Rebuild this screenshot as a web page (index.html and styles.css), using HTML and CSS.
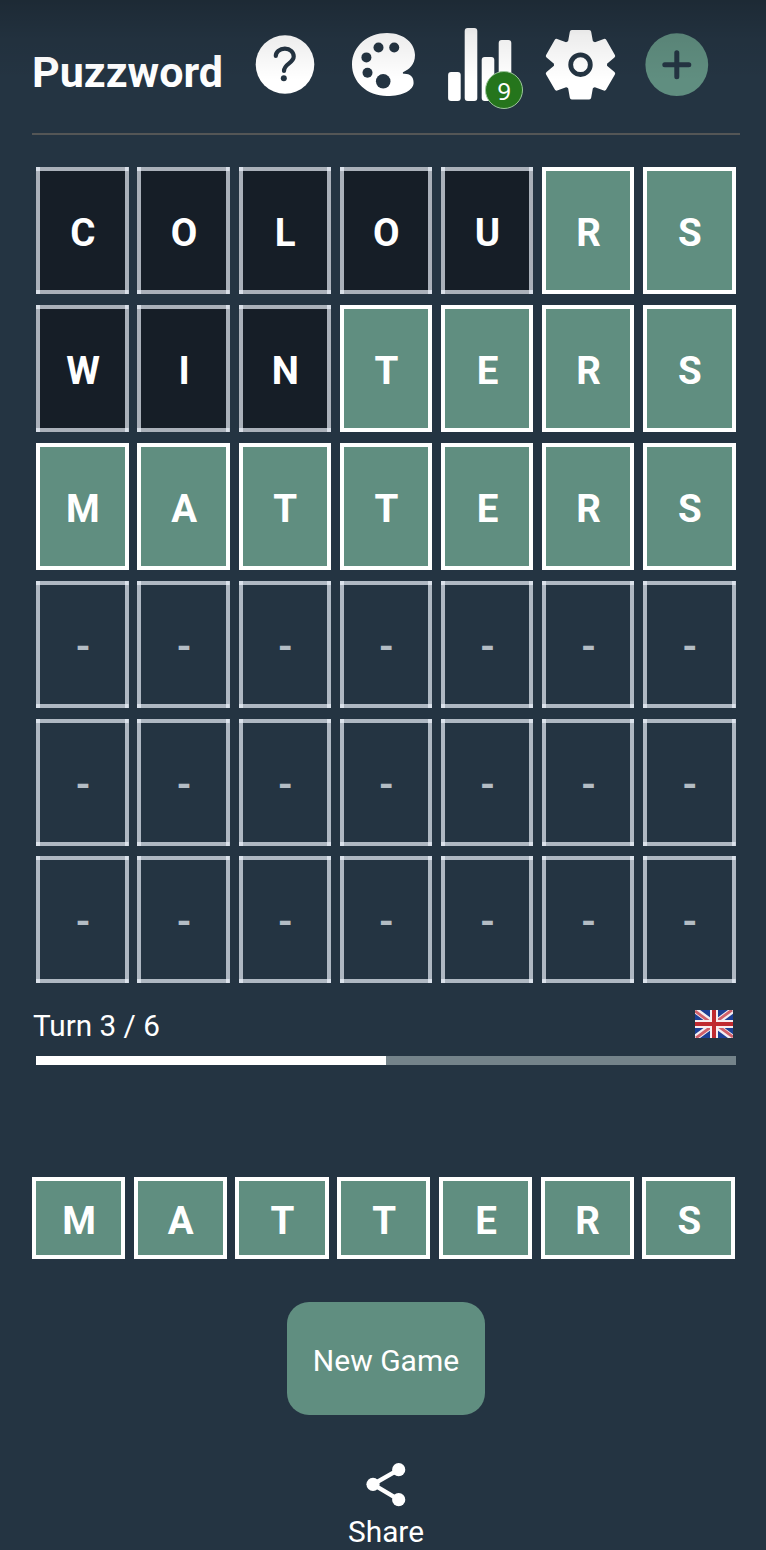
FILE: index.html
```html
<!DOCTYPE html>
<html lang="en">
<head>
    <meta charset="UTF-8">
    <meta name="viewport" content="width=device-width, initial-scale=1.0">
    <title>Puzzword</title>
    <link rel="stylesheet" href="styles.css">
</head>
<body>
    <header class="header">
        <h1 class="title">Puzzword</h1>
        <nav class="toolbar">
            <svg class="icon" viewBox="0 0 98 76">
                <circle cx="49" cy="37.5" r="29.3" fill="#fff"/>
                <path d="M39.8 29C39.8 25 43.5 21.6 48.9 21.6C54.2 21.6 57.7 25.2 57.7 29.6C57.7 36.3 48 36.5 48 44" fill="none" stroke="#243442" stroke-width="4.2" stroke-linecap="round"/>
                <circle cx="47.8" cy="51.3" r="3" fill="#243442"/>
            </svg>
            <svg class="icon" viewBox="0 0 98 76">
                <path d="M53 6C71 6 81 17 81 28C81 38 75 42.5 69 45.2C68.5 46.4 69 46.8 70.5 46.8C76 47 79.7 49.5 79.6 56C79.5 63 69 69 53 69C33 69 18 55 18 37.5C18 19 34 6 53 6Z" fill="#fff"/>
                <g fill="#243442">
                    <circle cx="44.5" cy="20.5" r="5"/>
                    <circle cx="60.2" cy="20.5" r="5"/>
                    <circle cx="32.4" cy="30.4" r="5"/>
                    <circle cx="33.5" cy="45.8" r="5"/>
                    <circle cx="49.2" cy="54.3" r="7.3"/>
                </g>
            </svg>
            <div class="stats">
                <svg class="icon" viewBox="0 0 98 76">
                    <g fill="#fff">
                        <rect x="16.1" y="45" width="12.6" height="29" rx="3"/>
                        <rect x="32.7" y="1" width="12.6" height="73" rx="3"/>
                        <rect x="49.7" y="30" width="12.6" height="44" rx="3"/>
                        <rect x="66.7" y="13" width="12.6" height="61" rx="3"/>
                    </g>
                </svg>
                <span class="badge">9</span>
            </div>
            <svg class="icon" viewBox="0 0 98 76">
                <g transform="translate(50.5 37.7)">
                    <g fill="#fff" stroke="#fff" stroke-width="4" stroke-linejoin="round">
                        <path id="tooth" d="M-8.7 -32.7H8.7L10.6 -22L0 0L-10.6 -22Z"/>
                        <use href="#tooth" transform="rotate(60)"/>
                        <use href="#tooth" transform="rotate(120)"/>
                        <use href="#tooth" transform="rotate(180)"/>
                        <use href="#tooth" transform="rotate(240)"/>
                        <use href="#tooth" transform="rotate(300)"/>
                    </g>
                    <circle r="26.6" fill="#fff"/>
                    <circle r="9.8" fill="none" stroke="#243442" stroke-width="4.8"/>
                </g>
            </svg>
            <svg class="icon" viewBox="0 0 98 76">
                <circle cx="48.8" cy="37.7" r="31.4" fill="#608e80"/>
                <path d="M36.8 37.7H60.8M48.8 25.7V49.7" stroke="#243442" stroke-width="5" stroke-linecap="round"/>
            </svg>
        </nav>
    </header>

    <main>
        <div class="board">
            <div class="tile miss">C</div>
            <div class="tile miss">O</div>
            <div class="tile miss">L</div>
            <div class="tile miss">O</div>
            <div class="tile miss">U</div>
            <div class="tile hit">R</div>
            <div class="tile hit">S</div>

            <div class="tile miss">W</div>
            <div class="tile miss">I</div>
            <div class="tile miss">N</div>
            <div class="tile hit">T</div>
            <div class="tile hit">E</div>
            <div class="tile hit">R</div>
            <div class="tile hit">S</div>

            <div class="tile hit">M</div>
            <div class="tile hit">A</div>
            <div class="tile hit">T</div>
            <div class="tile hit">T</div>
            <div class="tile hit">E</div>
            <div class="tile hit">R</div>
            <div class="tile hit">S</div>

            <div class="tile">-</div>
            <div class="tile">-</div>
            <div class="tile">-</div>
            <div class="tile">-</div>
            <div class="tile">-</div>
            <div class="tile">-</div>
            <div class="tile">-</div>

            <div class="tile">-</div>
            <div class="tile">-</div>
            <div class="tile">-</div>
            <div class="tile">-</div>
            <div class="tile">-</div>
            <div class="tile">-</div>
            <div class="tile">-</div>

            <div class="tile">-</div>
            <div class="tile">-</div>
            <div class="tile">-</div>
            <div class="tile">-</div>
            <div class="tile">-</div>
            <div class="tile">-</div>
            <div class="tile">-</div>
        </div>

        <div class="status">
            <span class="turn">Turn 3 / 6</span>
            <svg class="flag" viewBox="0 0 38 28">
                <rect width="38" height="28" fill="#1c3f94"/>
                <path d="M0 0L38 28M38 0L0 28" stroke="#f4eef2" stroke-width="6"/>
                <path d="M0 1L17 13.5M38 27L21 14.5M37 0L20 12.5M1 28L18 15.5" stroke="#d0606a" stroke-width="2.8"/>
                <path d="M19 0V28M0 14H38" stroke="#f8eef0" stroke-width="8"/>
                <path d="M19 0V28M0 14H38" stroke="#c02a30" stroke-width="4"/>
            </svg>
        </div>
        <div class="progress">
            <div class="progress-fill" style="width: 50%"></div>
        </div>

        <div class="answer">
            <div class="tile hit">M</div>
            <div class="tile hit">A</div>
            <div class="tile hit">T</div>
            <div class="tile hit">T</div>
            <div class="tile hit">E</div>
            <div class="tile hit">R</div>
            <div class="tile hit">S</div>
        </div>

        <div class="actions">
            <button type="button" class="new-game">New Game</button>
            <div class="share">
                <svg class="share-icon" viewBox="0 0 40 44">
                    <path d="M32.7 6.7L7 21.3L32.7 36.7" fill="none" stroke="#fff" stroke-width="4.4"/>
                    <g fill="#fff">
                        <circle cx="32.7" cy="6.7" r="6.6"/>
                        <circle cx="7" cy="21.3" r="6.6"/>
                        <circle cx="32.7" cy="36.7" r="6.6"/>
                    </g>
                </svg>
                <span>Share</span>
            </div>
        </div>
    </main>
</body>
</html>
```

FILE: styles.css
```css
* {
    margin: 0;
    padding: 0;
    box-sizing: border-box;
}

body {
    height: 1550px;
    overflow: hidden;
    position: relative;
    font-family: Roboto, sans-serif;
    background-color: #243442;
    color: #fff;
}

/* shade under the phone's status bar */
body::after {
    content: "";
    position: absolute;
    top: 0;
    left: 0;
    right: 0;
    height: 80px;
    background: linear-gradient(rgba(0, 0, 0, 0.2), rgba(0, 0, 0, 0.07) 45%, rgba(0, 0, 0, 0));
    pointer-events: none;
}

.header {
    display: flex;
    justify-content: space-between;
    height: 135px;
    margin: 0 26px 0 32px;
    padding: 27px 14px 0 0;
    border-bottom: 2px solid #545656;
}

.title {
    padding-top: 20px;
    font-size: 43px;
    line-height: 50px;
    font-weight: 700;
}

.toolbar {
    display: flex;
}

.icon {
    display: block;
    flex: none;
    width: 98px;
    height: 76px;
}

.stats {
    position: relative;
}

.badge {
    position: absolute;
    left: 53px;
    top: 43.5px;
    width: 38px;
    height: 38px;
    border: 1px solid #9cc79c;
    border-radius: 50%;
    background-color: #25751c;
    font-family: "Noto Sans", sans-serif;
    font-size: 24px;
    line-height: 37px;
    text-align: center;
}

.board {
    display: grid;
    grid-template-columns: repeat(7, 1fr);
    grid-auto-rows: 127px;
    gap: 10.9px 8.8px;
    margin: 32px 30.5px 0 36.3px;
}

/* four overlapping translucent edges, so the corners come out brighter */
.tile {
    --edge: rgba(240, 246, 255, 0.68);
    display: flex;
    align-items: center;
    justify-content: center;
    padding: 4px 0 0 1px;
    background-image:
        linear-gradient(var(--edge), var(--edge)),
        linear-gradient(var(--edge), var(--edge)),
        linear-gradient(var(--edge), var(--edge)),
        linear-gradient(var(--edge), var(--edge));
    background-position: top, bottom, left, right;
    background-repeat: no-repeat;
    background-size: 100% 4px, 100% 4px, 4px 100%, 4px 100%;
    color: #b3bcc4;
    font-size: 38.5px;
    font-weight: 700;
}

.miss {
    background-color: #161e27;
    color: #fff;
}

.hit {
    --edge: #fff;
    background-color: #608e80;
    color: #fff;
}

.status {
    display: flex;
    justify-content: space-between;
    align-items: center;
    height: 40px;
    margin: 21px 33px 0 33px;
}

.turn {
    padding-top: 2px;
    font-size: 29.7px;
}

.flag {
    width: 38px;
    height: 28px;
}

.progress {
    height: 9px;
    margin: 11.5px 30.5px 0 36.3px;
    background-color: #74838a;
}

.progress-fill {
    height: 100%;
    background-color: #fff;
}

.answer {
    display: grid;
    grid-template-columns: repeat(7, 1fr);
    grid-auto-rows: 82px;
    gap: 8.6px;
    margin: 112px 30.5px 0 32px;
}

.answer .tile {
    padding-top: 5px;
}

.actions {
    display: flex;
    flex-direction: column;
    align-items: center;
    margin: 43px 0 0 6px;
}

.new-game {
    width: 198.5px;
    height: 113.5px;
    border: none;
    border-radius: 22px;
    background-color: #608e80;
    color: #fff;
    font-family: inherit;
    font-size: 30px;
    padding-top: 3px;
}

.share {
    display: flex;
    flex-direction: column;
    align-items: center;
    margin-top: 47.5px;
    font-size: 29.8px;
    line-height: 34px;
}

.share-icon {
    width: 40px;
    height: 44px;
    margin-bottom: 8px;
}
```
